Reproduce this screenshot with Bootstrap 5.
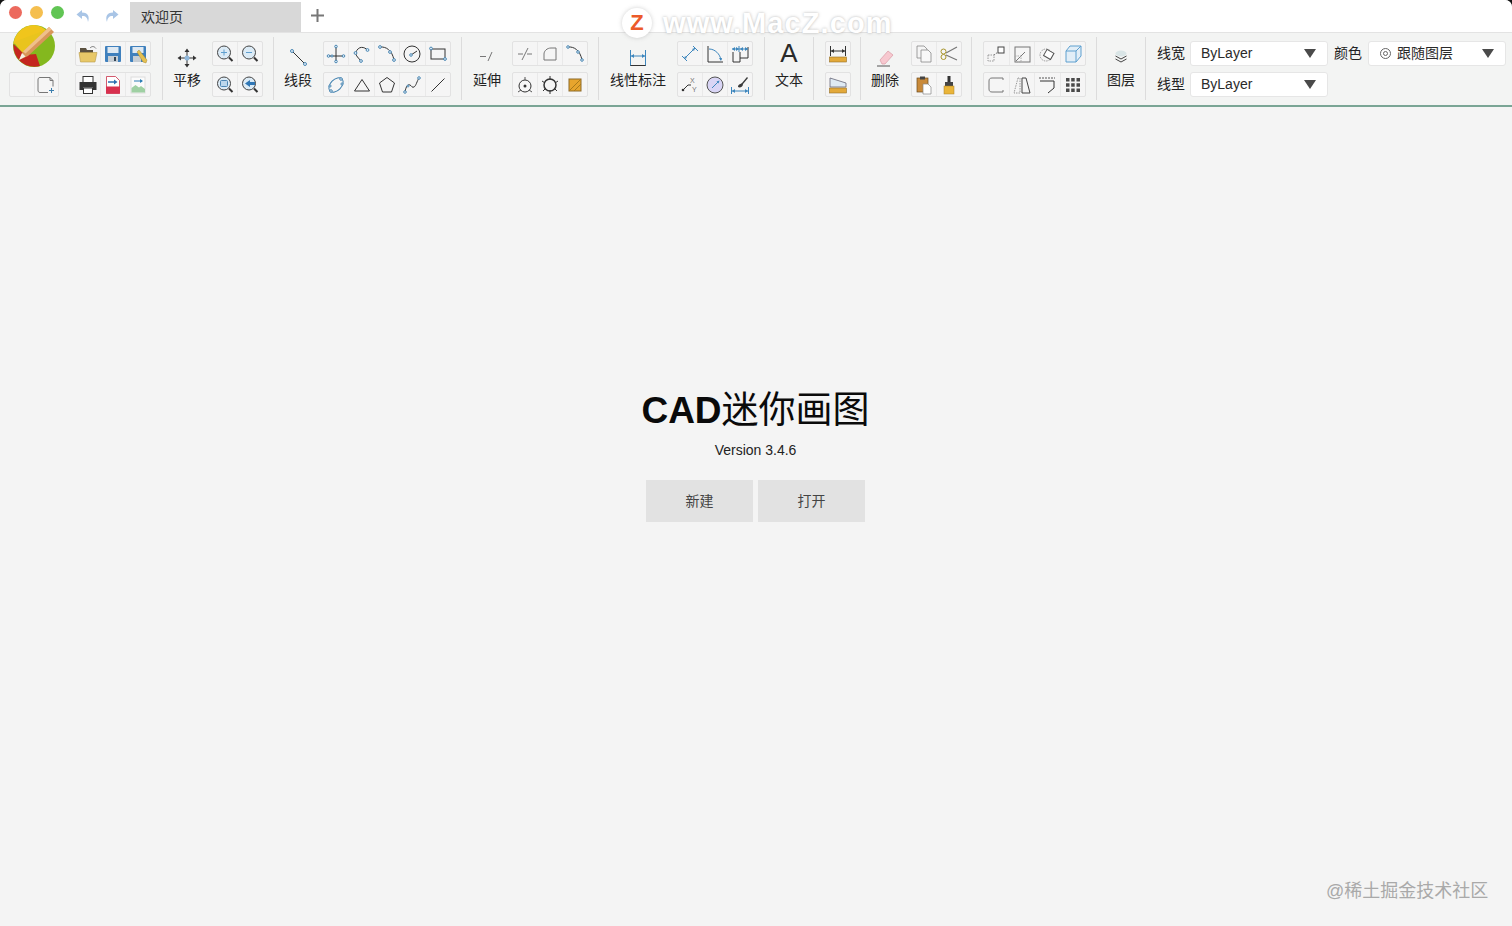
<!DOCTYPE html>
<html lang="zh-CN">
<head>
<meta charset="utf-8">
<title>CAD迷你画图</title>
<link href="https://cdn.jsdelivr.net/npm/bootstrap@5.3.0/dist/css/bootstrap.min.css" rel="stylesheet">
<style>
html,body{height:100%;overflow:hidden;background:#141414}
body{font-family:"Liberation Sans","Noto Sans CJK SC",sans-serif;font-size:14px;color:#222}
.app-win{height:926px;background:#f4f4f4;border-radius:7px 7px 0 0;overflow:hidden;position:relative}
.title-strip{height:33px;background:#fff;border-bottom:1px solid #e3e3e3}
.light{width:13px;height:13px;border-radius:50%;margin-top:6px;flex:none}
.l-red{background:#ec6a5e;margin-left:9px}
.l-yel{background:#f5bf4f;margin-left:8px}
.l-grn{background:#61c554;margin-left:8px}
.hist{width:18px;height:18px;fill:#a9c5e6}
.hist-1{margin-left:11px}.hist-2{margin-left:9px}
.tab-page{width:171px;height:30px;margin:2px 0 0 10px;background:#d8d8d8;padding-left:11px;line-height:30px;font-size:14px;color:#333}
.tab-plus{width:15px;height:15px;margin-left:9px;stroke:#777;stroke-width:2}
.tool-strip{height:74px;background:#f3f4f3;border-bottom:2px solid #7aa595}
.sec{display:flex;height:63px;margin-top:4px;padding:4px 10px 0;border-right:1px solid #dcdcdc;gap:11px}
.sec-last{border-right:0;padding-left:11px;gap:0}
.pl-11{padding-left:11px}.pr-9{padding-right:9px}.pr-11{padding-right:11px}.pl-9{padding-left:9px}.gap-12{gap:12px}.gap-16{gap:16px}
.big-tool{display:flex;flex-direction:column;align-items:center;width:28px}
.big-wide{width:56px}
.big-icon{height:27px;display:flex;align-items:flex-end;justify-content:center}
.big-label{line-height:20px;margin-top:2px;font-size:14px;white-space:nowrap;color:#222}
.letter-a{font-size:26px;line-height:29px;color:#2a2a2a;height:27px}
.cells{display:flex;flex-direction:column;gap:6px}
.w-c1{width:26px}.w-c2{width:51px}.w-c3{width:76px}.w-c4{width:103px}.w-c5{width:128px}.w-l2{width:50px}
.cell-row{display:flex;height:25px;border:1px solid #e2e2e2;border-radius:2px;background:#f5f5f5}
.tcell{flex:1 1 0;display:flex;align-items:center;justify-content:center;border-right:1px solid #e9e9e9;min-width:0}
.tcell:last-child{border-right:0}
.tcell svg{width:20px;height:20px;flex:none}
.ln{fill:none;stroke:#333;stroke-width:1}
.lg{fill:none;stroke:#777;stroke-width:1}
.lb{fill:none;stroke:#3d86bd;stroke-width:1}
.nd{fill:#e4eef7;stroke:#3d7fae;stroke-width:.9}
.form-row{display:flex;align-items:center;height:25px}
.form-rows{display:flex;flex-direction:column;gap:6px}
.fld-label{width:27px;margin-right:6px;padding-bottom:2px;font-size:14px;white-space:nowrap;color:#222;line-height:20px}
.fld-mid{margin:0 6px;width:28px}
.ddl{width:138px;height:25px;background:#fff;border:1px solid #e6e6e6;border-radius:3px;padding:0 11px 0 10px;font-size:14px;color:#2a2a2a}
.ddl-caret{width:0;height:0;border-left:6.5px solid transparent;border-right:6.5px solid transparent;border-top:9px solid #4a4a4a}
.ring{width:11px;height:11px;border:1px solid #666;border-radius:50%;display:inline-block;position:relative;margin:0 6px 0 1px;vertical-align:-1px}
.ring::after{content:"";position:absolute;inset:2px;border:1px solid #666;border-radius:50%}
.work{height:819px;padding:277px 1px 0 0}
.app-title{font-size:37px;line-height:46px;font-weight:700;color:#0a0a0a;margin:0;text-align:center}
.app-title span{font-weight:400;font-family:"Noto Sans CJK SC",sans-serif}
.app-ver{font-size:14px;line-height:20px;margin-top:6px;color:#222}
.start-btns{margin-top:20px;gap:5px}
.btn-start{width:107px;height:42px;background:#e2e2e2;border:0;border-radius:0;color:#444;font-size:14px;padding:0}
.btn-start:hover{background:#dadada;color:#333}
.logo-mark{position:absolute;left:12px;top:24px;width:44px;height:44px}
.wm-site{position:absolute;left:622px;top:6px;display:flex;align-items:center;gap:11px;pointer-events:none}
.wm-badge{width:30px;height:30px;border-radius:50%;background:#fff;box-shadow:0 0 4px rgba(120,120,120,.35);color:#ec5a2a;font:700 22px/30px "Liberation Sans",sans-serif;text-align:center}
.wm-text{font:700 29px/34px "Liberation Sans",sans-serif;color:#fff;letter-spacing:1.1px;text-shadow:0 0 3px rgba(110,110,110,.5)}
.wm-corner{position:absolute;left:1326px;top:879px;font-size:18px;line-height:24px;color:#a9a9a9;white-space:nowrap}
</style>
</head>
<body>
<div class="app-win">
  <div class="title-strip d-flex align-items-start">
    <div class="light l-red"></div>
    <div class="light l-yel"></div>
    <div class="light l-grn"></div>
    <svg class="hist hist-1 mt-2" viewBox="0 0 18 18"><path d="M7 2 1.500 6.500 7 11V8c3.500-.3 5.500 1.500 6 6 1.700-5 .5-9.300-6-9.500z"/></svg>
    <svg class="hist hist-2 mt-2" viewBox="0 0 18 18"><path d="M11 2l5.500 4.500L11 11V8c-3.500-.3-5.500 1.500-6 6-1.700-5-.5-9.300 6-9.500z"/></svg>
    <div class="tab-page">欢迎页</div>
    <svg class="tab-plus mt-2" viewBox="0 0 15 15"><path d="M7.500 1v13M1 7.500h13"/></svg>
  </div>

  <div class="tool-strip d-flex">
    <!-- file -->
    <div class="sec pl-9 pr-11 gap-16">
      <div class="cells w-l2">
        <div class="form-row"></div>
        <div class="cell-row">
          <div class="tcell"></div>
          <div class="tcell"><svg viewBox="0 0 20 20"><path class="lg" d="M4 2.500h10l3 3v6M4 2.500C2.500 2.500 2 3.500 2 5v10c0 1.500.5 2.500 2 2.500h8M14 2.500v3h3"/><path d="M13 15.500h5M15.500 13v5" stroke="#3d7fae" fill="none"/></svg></div>
        </div>
      </div>
      <div class="cells w-c3">
        <div class="cell-row">
          <div class="tcell"><svg viewBox="0 0 20 20"><path d="M2 7V4h6l1 2h6v3H2z" fill="#5b5140"/><path d="M1 8.500h18L17 18H2.500z" fill="#e8c868" stroke="#b79a49" stroke-width=".6"/><path d="M12 4c2-2 4-2 6 .5" fill="none" stroke="#777"/></svg></div>
          <div class="tcell"><svg viewBox="0 0 20 20"><rect x="2" y="2" width="16" height="16" rx="1" fill="#3f80bd"/><rect x="4.500" y="3" width="11" height="6" fill="#dfe9f2"/><rect x="5" y="12" width="10" height="6" fill="#c7ced4"/><rect x="11" y="13" width="2" height="4" fill="#345"/></svg></div>
          <div class="tcell"><svg viewBox="0 0 20 20"><rect x="2" y="2" width="16" height="16" rx="1" fill="#3f80bd"/><rect x="4.500" y="3" width="11" height="6" fill="#dfe9f2"/><rect x="5" y="12" width="8" height="6" fill="#c7ced4"/><path d="M9 8l2-2 8 10-1 3-3-1z" fill="#e6c050" stroke="#a98a33" stroke-width=".5"/></svg></div>
        </div>
        <div class="cell-row">
          <div class="tcell"><svg viewBox="0 0 20 20"><rect x="5" y="1.500" width="10" height="6" fill="#fff" stroke="#333"/><path d="M1.500 7h17v8h-3.500v-2.500H5V15H1.500z" fill="#333"/><rect x="5.500" y="13" width="9" height="5.500" fill="#fff" stroke="#333"/></svg></div>
          <div class="tcell"><svg viewBox="0 0 20 20"><path d="M3.500 1.500h9l4 4v13h-13z" fill="#fff" stroke="#c9314a" stroke-width=".8"/><rect x="3" y="11.500" width="14" height="7" fill="#d8304e"/><path d="M5 7h8" stroke="#2d6fb0" stroke-width="1.400"/><path d="M11 4.500l3.500 2.500L11 9.500z" fill="#2d6fb0"/></svg></div>
          <div class="tcell"><svg viewBox="0 0 20 20"><rect x="3" y="2" width="14" height="16" fill="#fbfbfb" stroke="#ddd"/><path d="M3.500 17.500V13l4-3 3.500 2.500 2-1.500 4 3v3.500z" fill="#9fd0a3"/><path d="M6 6h8" stroke="#2d7fb5" stroke-width="1.200"/><path d="M12 4l3 2-3 2z" fill="#2d7fb5"/></svg></div>
        </div>
      </div>
    </div>

    <!-- pan / zoom -->
    <div class="sec">
      <div class="big-tool">
        <div class="big-icon"><svg width="20" height="20" viewBox="0 0 20 20"><path d="M10 3v14M3 10h14" stroke="#333" fill="none"/><path d="M10 .5 7.500 4h5zM10 19.500 7.500 16h5zM.5 10 4 7.500v5zM19.500 10 16 7.500v5z" fill="#333"/><circle cx="10" cy="10" r="2.500" fill="#8fb8dc"/></svg></div>
        <div class="big-label">平移</div>
      </div>
      <div class="cells w-c2">
        <div class="cell-row">
          <div class="tcell"><svg viewBox="0 0 20 20"><circle cx="9" cy="8.500" r="6.500" fill="#dcebf6" stroke="#444"/><path d="M14 13.500l3.500 3.500" stroke="#333" stroke-width="2"/><path d="M9 5.500v6M6 8.500h6" stroke="#5f9fcf"/></svg></div>
          <div class="tcell"><svg viewBox="0 0 20 20"><circle cx="9" cy="8.500" r="6.500" fill="#dcebf6" stroke="#444"/><path d="M14 13.500l3.500 3.500" stroke="#333" stroke-width="2"/><path d="M6 8.500h6" stroke="#5f9fcf"/></svg></div>
        </div>
        <div class="cell-row">
          <div class="tcell"><svg viewBox="0 0 20 20"><circle cx="9" cy="8.500" r="6.500" fill="#dcebf6" stroke="#444"/><path d="M14 13.500l3.500 3.500" stroke="#333" stroke-width="2"/><rect x="5.500" y="5.500" width="7" height="6" rx="1" fill="#bcd7ec" stroke="#4d87b5"/></svg></div>
          <div class="tcell"><svg viewBox="0 0 20 20"><circle cx="9" cy="8.500" r="6.500" fill="#dcebf6" stroke="#444"/><path d="M14 13.500l3.500 3.500" stroke="#333" stroke-width="2"/><path d="M5 8.500 10 5v2h5v3h-5v2z" fill="#2f76b5"/></svg></div>
        </div>
      </div>
    </div>

    <!-- draw -->
    <div class="sec">
      <div class="big-tool">
        <div class="big-icon"><svg width="20" height="20" viewBox="0 0 20 20"><path class="ln" d="M4 3l13 13"/><circle class="nd" cx="4" cy="3" r="1.500"/><circle class="nd" cx="17" cy="16" r="1.500"/></svg></div>
        <div class="big-label">线段</div>
      </div>
      <div class="cells w-c5">
        <div class="cell-row">
          <div class="tcell"><svg viewBox="0 0 20 20"><path class="ln" d="M10 2v16M2 12h16"/><circle class="nd" cx="10" cy="2.500" r="1.300"/><circle class="nd" cx="10" cy="17.500" r="1.300"/><circle class="nd" cx="2.500" cy="12" r="1.300"/><circle class="nd" cx="17.500" cy="12" r="1.300"/><circle class="nd" cx="6" cy="12" r="1.100"/></svg></div>
          <div class="tcell"><svg viewBox="0 0 20 20"><path class="ln" d="M3.500 9c3-8 9-6 12-3M3.500 9c.5 3 3 5 5.500 8"/><circle class="nd" cx="15.500" cy="6" r="1.400"/><circle class="nd" cx="3.500" cy="9" r="1.400"/><circle class="nd" cx="9" cy="17" r="1.400"/></svg></div>
          <div class="tcell"><svg viewBox="0 0 20 20"><path class="ln" d="M3 3c6-.5 12 3 14 13"/><circle class="nd" cx="3" cy="3" r="1.400"/><circle class="nd" cx="13" cy="8" r="1.400"/><circle class="nd" cx="17" cy="16" r="1.400"/></svg></div>
          <div class="tcell"><svg viewBox="0 0 20 20"><circle class="ln" cx="10" cy="10" r="8"/><path d="M9 11l6-4" stroke="#333"/><circle class="nd" cx="9" cy="11" r="1.300"/></svg></div>
          <div class="tcell"><svg viewBox="0 0 20 20"><rect class="ln" x="3" y="5" width="14" height="10"/><circle class="nd" cx="3" cy="4.500" r="1.400"/><circle class="nd" cx="17" cy="15" r="1.400"/></svg></div>
        </div>
        <div class="cell-row">
          <div class="tcell"><svg viewBox="0 0 20 20"><ellipse cx="10" cy="10" rx="8.500" ry="5.500" transform="rotate(-45 10 10)" fill="none" stroke="#3d7fae"/><circle class="nd" cx="15" cy="4" r="1.300"/><circle class="nd" cx="5" cy="16" r="1.300"/><circle class="nd" cx="4" cy="11" r="1.100"/><circle class="nd" cx="16" cy="9" r="1.100"/></svg></div>
          <div class="tcell"><svg viewBox="0 0 20 20"><path class="ln" d="M10 4.500l7.500 11.500h-15z"/></svg></div>
          <div class="tcell"><svg viewBox="0 0 20 20"><path class="ln" d="M10 2.500l7.500 5.500-3 9h-9l-3-9z"/></svg></div>
          <div class="tcell"><svg viewBox="0 0 20 20"><path class="ln" d="M3 17c1-6 3-8 5-7s2 3 4 2 3-6 5-9"/><circle class="nd" cx="3" cy="17" r="1.300"/><circle class="nd" cx="17" cy="3" r="1.300"/><circle class="nd" cx="6" cy="11" r="1"/></svg></div>
          <div class="tcell"><svg viewBox="0 0 20 20"><path class="ln" d="M3.500 16.500l13-13"/></svg></div>
        </div>
      </div>
    </div>

    <!-- modify -->
    <div class="sec pl-11">
      <div class="big-tool">
        <div class="big-icon"><svg width="20" height="20" viewBox="0 0 20 20"><path d="M3 8.500h6M11 13l4-9" stroke="#777" fill="none"/></svg></div>
        <div class="big-label">延伸</div>
      </div>
      <div class="cells w-c3">
        <div class="cell-row">
          <div class="tcell"><svg viewBox="0 0 20 20"><path d="M3 10h5M12 10h5M7 16 13 4" stroke="#777" fill="none"/></svg></div>
          <div class="tcell"><svg viewBox="0 0 20 20"><path class="lg" d="M4 16V10c0-3 3-6 7-6h5v12z"/></svg></div>
          <div class="tcell"><svg viewBox="0 0 20 20"><path class="ln" d="M3 3c6-.5 12 3 14 13"/><circle class="nd" cx="3" cy="3" r="1.300"/><circle class="nd" cx="13" cy="8" r="1.300"/><circle class="nd" cx="17" cy="16" r="1.300"/></svg></div>
        </div>
        <div class="cell-row">
          <div class="tcell"><svg viewBox="0 0 20 20"><circle class="ln" cx="10" cy="11" r="6"/><circle cx="10" cy="11" r="1.500" fill="#333"/><path d="M10 2v3M3 17l3-2M17 17l-3-2" stroke="#555"/></svg></div>
          <div class="tcell"><svg viewBox="0 0 20 20"><circle cx="10" cy="10" r="6" fill="none" stroke="#333" stroke-width="1.500"/><path d="M10 1v4M10 15v4M2 6l3 2M18 6l-3 2M3 16l3-3M17 16l-3-3" stroke="#333"/></svg></div>
          <div class="tcell"><svg viewBox="0 0 20 20"><rect x="4" y="4" width="12" height="12" fill="#e7a52d" stroke="#8b6a2a"/><path d="M5 15l10-10M9 16l7-7" stroke="#a87a1a"/></svg></div>
        </div>
      </div>
    </div>

    <!-- dim -->
    <div class="sec pl-11 pr-11">
      <div class="big-tool big-wide">
        <div class="big-icon"><svg width="20" height="20" viewBox="0 0 20 20"><path d="M2.500 2v16M17.500 2v16" stroke="#3d86bd" fill="none"/><path d="M2.500 17.500h15" stroke="#333"/><path d="M3 8h14" stroke="#3d86bd"/><path d="M3 8l3-2v4zM17 8l-3-2v4z" fill="#3d86bd"/></svg></div>
        <div class="big-label">线性标注</div>
      </div>
      <div class="cells w-c3">
        <div class="cell-row">
          <div class="tcell"><svg viewBox="0 0 20 20"><path class="lb" d="M4 15 15 4M2 12l5 5M13 2l5 5"/><path d="M4 15l1-3 2 2zM15 4l-1 3-2-2z" fill="#3d86bd"/></svg></div>
          <div class="tcell"><svg viewBox="0 0 20 20"><path class="ln" d="M3 2v16h15"/><path class="lb" d="M4 5c6 0 11 5 12 11"/><path d="M16 17l-2-3h3z" fill="#3d86bd"/></svg></div>
          <div class="tcell"><svg viewBox="0 0 20 20"><path class="ln" d="M3 8v10h7V8M10 14h8V3"/><path class="lb" d="M2 5h16M9 2v6"/><path d="M2 5l3-2v4zM9 5l-3-2v4zM10 5l3-2v4zM18 5l-3-2v4z" fill="#3d86bd"/></svg></div>
        </div>
        <div class="cell-row">
          <div class="tcell"><svg viewBox="0 0 20 20"><path class="ln" d="M3 15l5-5h3"/><circle cx="3" cy="15" r="1.300" fill="#333"/><text x="10" y="8" font-size="7" fill="#777" font-family="Liberation Sans">X</text><text x="12" y="17" font-size="7" fill="#777" font-family="Liberation Sans">Y</text></svg></div>
          <div class="tcell"><svg viewBox="0 0 20 20"><circle cx="10" cy="10" r="8" fill="#d9d5f5" stroke="#555"/><path class="lb" d="M7 13l7-7"/><path d="M14.500 5.500l-1 3-2-2z" fill="#3d86bd"/></svg></div>
          <div class="tcell"><svg viewBox="0 0 20 20"><path class="lb" d="M1.500 12v7M18.500 12v7M2 16h16"/><path d="M2 16l3-2v4zM18 16l-3-2v4z" fill="#3d86bd"/><path d="M8 12c0-3 3-3 4-4l5-6 1 1-5 6c0 3-3 4-5 3z" fill="#3a3a3a"/></svg></div>
        </div>
      </div>
    </div>

    <!-- text -->
    <div class="sec">
      <div class="big-tool">
        <div class="big-icon letter-a">A</div>
        <div class="big-label">文本</div>
      </div>
    </div>

    <!-- measure -->
    <div class="sec pl-11 pr-9">
      <div class="cells w-c1">
        <div class="cell-row">
          <div class="tcell"><svg viewBox="0 0 20 20"><path d="M2.500 2v10M17.500 2v10" stroke="#333"/><path d="M3 7h14" stroke="#333"/><path d="M3 7l3-2v4zM17 7l-3-2v4z" fill="#333"/><rect x="1.500" y="13" width="17" height="5" fill="#e3a93a" stroke="#94702a" stroke-width=".6"/></svg></div>
        </div>
        <div class="cell-row">
          <div class="tcell"><svg viewBox="0 0 20 20"><path d="M2 3l16 5v4H2z" fill="#dfeaf3" stroke="#667" stroke-width=".8"/><rect x="1.500" y="13" width="17" height="5" fill="#e3a93a" stroke="#94702a" stroke-width=".6"/></svg></div>
        </div>
      </div>
    </div>

    <!-- edit -->
    <div class="sec pr-9 gap-12">
      <div class="big-tool">
        <div class="big-icon"><svg width="20" height="20" viewBox="0 0 20 20"><path d="M5 12l8-9 5 4-8 9H7z" fill="#f7c8cf" stroke="#d99aa4" stroke-width=".7"/><path d="M2 18h13" stroke="#555"/></svg></div>
        <div class="big-label">删除</div>
      </div>
      <div class="cells w-c2">
        <div class="cell-row">
          <div class="tcell"><svg viewBox="0 0 20 20"><path d="M3 2h7l3 3v9H3z" fill="#f5f5f5" stroke="#888" stroke-width=".8"/><path d="M7 6h7l3 3v9H7z" fill="#f8f8f8" stroke="#888" stroke-width=".8"/></svg></div>
          <div class="tcell"><svg viewBox="0 0 20 20"><path d="M7 9 18 3M7 11l11 5" stroke="#777" stroke-width="1.200" fill="none"/><circle cx="4.500" cy="7.500" r="2.500" fill="none" stroke="#a8942a"/><circle cx="4.500" cy="13" r="2.500" fill="none" stroke="#a8942a"/></svg></div>
        </div>
        <div class="cell-row">
          <div class="tcell"><svg viewBox="0 0 20 20"><rect x="3" y="3" width="11" height="14" fill="#c98a3a" stroke="#6b4a1e" stroke-width=".7"/><rect x="6" y="1.500" width="5" height="3" fill="#444"/><path d="M9 9h5l3 3v7H9z" fill="#fff" stroke="#888" stroke-width=".7"/></svg></div>
          <div class="tcell"><svg viewBox="0 0 20 20"><rect x="8.500" y="1" width="3" height="7" fill="#333"/><rect x="6" y="7" width="8" height="4" fill="#444"/><rect x="5" y="11" width="10" height="8" fill="#eab53a" stroke="#a9812a" stroke-width=".5"/></svg></div>
        </div>
      </div>
    </div>

    <!-- transform -->
    <div class="sec pl-11">
      <div class="cells w-c4">
        <div class="cell-row">
          <div class="tcell"><svg viewBox="0 0 20 20"><rect x="2" y="11" width="6" height="6" fill="none" stroke="#999" stroke-dasharray="1.500 1"/><rect x="12" y="3" width="6" height="6" fill="#fff" stroke="#444"/><path d="M8 11l4-3" stroke="#777" stroke-dasharray="1.500 1"/></svg></div>
          <div class="tcell"><svg viewBox="0 0 20 20"><rect class="lg" x="3" y="3" width="15" height="15"/><path class="lg" d="M3 18l10-10"/><rect x="3" y="12" width="6" height="6" fill="none" stroke="#aaa" stroke-dasharray="1.500 1"/></svg></div>
          <div class="tcell"><svg viewBox="0 0 20 20"><circle cx="9" cy="11" r="6" fill="none" stroke="#999" stroke-dasharray="1.500 1"/><rect x="8" y="7" width="8" height="7" transform="rotate(30 12 10)" fill="#fff" stroke="#555"/></svg></div>
          <div class="tcell"><svg viewBox="0 0 20 20"><path d="M3 7l4-5h11v10l-5 6H3z" fill="#e2eef7" stroke="#5ea0cf"/><path d="M3 7h10v11M13 7l5-5" fill="none" stroke="#5ea0cf"/></svg></div>
        </div>
        <div class="cell-row">
          <div class="tcell"><svg viewBox="0 0 20 20"><path class="lg" d="M17 3H6C4 3 3 4 3 6v8c0 2 1 3 3 3h11M17 3v2M17 15v2"/></svg></div>
          <div class="tcell"><svg viewBox="0 0 20 20"><path d="M6 3 2 18h6V3z" fill="none" stroke="#999" stroke-dasharray="1.500 1"/><path d="M12 3h2l4 15h-8V3z" fill="none" stroke="#444"/></svg></div>
          <div class="tcell"><svg viewBox="0 0 20 20"><path d="M2 3h16" stroke="#555" stroke-dasharray="2 1"/><path class="ln" d="M3 6h14v7l-6 5"/></svg></div>
          <div class="tcell"><svg viewBox="0 0 20 20"><path d="M3 3h3.500v3.500H3zM8.200 3h3.500v3.500H8.200zM13.500 3H17v3.500h-3.500zM3 8.200h3.500v3.500H3zM8.200 8.200h3.500v3.500H8.200zM13.500 8.200H17v3.500h-3.500zM3 13.500h3.500V17H3zM8.200 13.500h3.500V17H8.200zM13.500 13.500H17V17h-3.500z" fill="#4a4a4a"/></svg></div>
        </div>
      </div>
    </div>

    <!-- layers -->
    <div class="sec">
      <div class="big-tool">
        <div class="big-icon"><svg width="20" height="20" viewBox="0 0 20 20"><ellipse cx="10" cy="5.500" rx="5.500" ry="3" fill="#d9e5e6"/><path d="M4.500 8l5.500 3 5.500-3M4.500 11l5.500 3 5.500-3" stroke="#444" fill="none"/></svg></div>
        <div class="big-label">图层</div>
      </div>
    </div>

    <!-- props -->
    <div class="sec sec-last">
      <div class="form-rows">
        <div class="form-row">
          <div class="fld-label">线宽</div>
          <div class="ddl d-flex align-items-center justify-content-between"><span>ByLayer</span><i class="ddl-caret"></i></div>
          <div class="fld-label fld-mid">颜色</div>
          <div class="ddl d-flex align-items-center justify-content-between"><span><i class="ring"></i>跟随图层</span><i class="ddl-caret"></i></div>
        </div>
        <div class="form-row">
          <div class="fld-label">线型</div>
          <div class="ddl d-flex align-items-center justify-content-between"><span>ByLayer</span><i class="ddl-caret"></i></div>
        </div>
      </div>
    </div>
  </div>

  <main class="work d-flex flex-column align-items-center">
    <h1 class="app-title">CAD<span>迷你画图</span></h1>
    <div class="app-ver">Version 3.4.6</div>
    <div class="start-btns d-flex">
      <button type="button" class="btn btn-start">新建</button>
      <button type="button" class="btn btn-start">打开</button>
    </div>
  </main>

  <svg class="logo-mark" viewBox="0 0 44 44">
    <circle cx="22" cy="22" r="21" fill="#84b81e"/>
    <path d="M22 1A21 21 0 0 0 1.500 20L36 8A21 21 0 0 0 22 1z" fill="#f0c51c"/>
    <path d="M1.500 18L34 6 12 31z" fill="#e9c41d"/>
    <path d="M1.500 20A21 21 0 0 0 28 42L24 30 13 31z" fill="#c4261f"/>
    <path d="M37 3l5 5-26 24-9 4 4-8z" fill="#d8965a"/>
    <path d="M37 3l2.500 2.500-26 24-2.500-2z" fill="#efc08a"/>
    <path d="M7 36l3-7 3.500 3.500z" fill="#f7efe2"/>
  </svg>
  <div class="wm-site"><span class="wm-badge">Z</span><span class="wm-text">www.MacZ.com</span></div>
  <div class="wm-corner">@稀土掘金技术社区</div>
</div>
</body>
</html>
